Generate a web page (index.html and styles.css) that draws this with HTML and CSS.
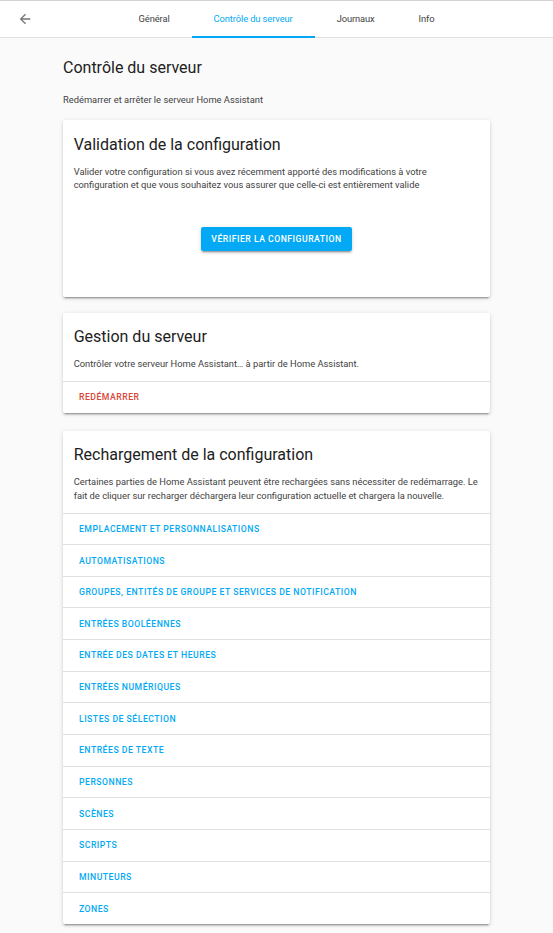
FILE: index.html
```html
<!DOCTYPE html>
<html lang="fr">
<head>
<meta charset="utf-8">
<title>Contrôle du serveur</title>
<link rel="stylesheet" href="styles.css">
</head>
<body>
<header class="toolbar">
  <button class="back" aria-label="Retour">
    <svg viewBox="0 0 24 24" width="16" height="16"><path fill="currentColor" d="M20,11V13H8L13.5,18.5L12.08,19.92L4.16,12L12.08,4.08L13.5,5.5L8,11H20Z"/></svg>
  </button>
  <nav class="tabs">
    <a class="tab">Général</a>
    <a class="tab active">Contrôle du serveur</a>
    <a class="tab">Journaux</a>
    <a class="tab">Info</a>
  </nav>
</header>
<main class="section">
  <h1 class="page-title">Contrôle du serveur</h1>
  <p class="intro">Redémarrer et arrêter le serveur Home Assistant</p>

  <section class="card card-validate">
    <h2 class="card-header">Validation de la configuration</h2>
    <div class="card-content">
      <p>Valider votre configuration si vous avez récemment apporté des modifications à votre configuration et que vous souhaitez vous assurer que celle-ci est entièrement valide</p>
      <div class="validate-container">
        <button class="raised">Vérifier la configuration</button>
      </div>
    </div>
  </section>

  <section class="card card-server">
    <h2 class="card-header">Gestion du serveur</h2>
    <div class="card-content">
      <p>Contrôler votre serveur Home Assistant… à partir de Home Assistant.</p>
    </div>
    <div class="card-actions"><button class="text-btn warning">Redémarrer</button></div>
  </section>

  <section class="card card-reload">
    <h2 class="card-header">Rechargement de la configuration</h2>
    <div class="card-content">
      <p>Certaines parties de Home Assistant peuvent être rechargées sans nécessiter de redémarrage. Le fait de cliquer sur recharger déchargera leur configuration actuelle et chargera la nouvelle.</p>
    </div>
    <div class="card-actions"><button class="text-btn">Emplacement et personnalisations</button></div>
    <div class="card-actions"><button class="text-btn">Automatisations</button></div>
    <div class="card-actions"><button class="text-btn">Groupes, entités de groupe et services de notification</button></div>
    <div class="card-actions"><button class="text-btn">Entrées booléennes</button></div>
    <div class="card-actions"><button class="text-btn">Entrée des dates et heures</button></div>
    <div class="card-actions"><button class="text-btn">Entrées numériques</button></div>
    <div class="card-actions"><button class="text-btn">Listes de sélection</button></div>
    <div class="card-actions"><button class="text-btn">Entrées de texte</button></div>
    <div class="card-actions"><button class="text-btn">Personnes</button></div>
    <div class="card-actions"><button class="text-btn">Scènes</button></div>
    <div class="card-actions"><button class="text-btn">Scripts</button></div>
    <div class="card-actions"><button class="text-btn">Minuteurs</button></div>
    <div class="card-actions"><button class="text-btn">Zones</button></div>
  </section>
</main>
</body>
</html>
```

FILE: styles.css
```css
* { box-sizing: border-box; }
html, body { margin: 0; padding: 0; }
body {
  background: #fafafa;
  font-family: Roboto, "Noto Sans", sans-serif;
  color: #212121;
  overflow: hidden;
  height: 933px;
}
.toolbar {
  display: flex;
  align-items: stretch;
  height: 38px;
  background: #fff;
  border-top: 1px solid #d4d2cf;
  border-bottom: 1px solid #e0e0e0;
}
.back {
  width: 52px;
  padding: 0 0 0 17px;
  border: 0;
  background: none;
  color: #757575;
  display: flex;
  align-items: center;
}
.back svg { display: block; }
.tabs {
  flex: 1;
  display: flex;
  justify-content: center;
  padding-right: 32px;
  margin-bottom: -1px;
}
.tab {
  display: flex;
  align-items: center;
  padding: 0 22px;
  font-size: 9.33px;
  letter-spacing: -0.1px;
  color: #424242;
  border-bottom: 2px solid transparent;
}
.tab.active {
  color: #03a9f4;
  border-bottom-color: #03a9f4;
}
.section {
  width: 427px;
  margin: 0 auto;
  padding-top: 18.67px;
}
.page-title {
  margin: 0 0 14.67px;
  font-size: 16px;
  line-height: 21.33px;
  font-weight: 400;
  color: #212121;
}
.intro {
  margin: 0 0 14.5px;
  font-size: 9.33px;
  line-height: 13.33px;
  color: #424242;
}
.card {
  background: #fff;
  border-radius: 2px;
  box-shadow: 0 2px 2px 0 rgba(0,0,0,0.14), 0 1px 5px 0 rgba(0,0,0,0.12), 0 3px 1px -2px rgba(0,0,0,0.2);
  margin-bottom: 16px;
}
.card-server { margin-bottom: 18px; }
.card-header {
  margin: 0;
  padding: 13.33px 10.67px 9.83px;
  font-size: 16px;
  line-height: 21.33px;
  font-weight: 400;
  color: #212121;
}
.card-content {
  padding: 0 10.67px 10.67px;
}
.card-content p {
  margin: 0;
  font-size: 9.33px;
  line-height: 13.33px;
  color: #424242;
}
.validate-container {
  height: 94.33px;
  display: flex;
  align-items: center;
  justify-content: center;
}
.raised {
  height: 24px;
  padding: 0 10.67px;
  border: 0;
  border-radius: 2px;
  background: #03a9f4;
  color: #fff;
  font-family: inherit;
  font-size: 8.67px;
  font-weight: 500;
  letter-spacing: 0.5px;
  text-transform: uppercase;
  box-shadow: 0 2px 2px 0 rgba(0,0,0,0.14), 0 1px 5px 0 rgba(0,0,0,0.12), 0 3px 1px -2px rgba(0,0,0,0.2);
}
.card-actions {
  border-top: 1px solid #e0e0e0;
  padding: 3.33px 5.33px;
  display: flex;
}
.text-btn {
  height: 24px;
  padding: 0 10.67px;
  border: 0;
  background: none;
  color: #03a9f4;
  font-family: inherit;
  font-size: 8.67px;
  font-weight: 500;
  letter-spacing: 0.5px;
  text-transform: uppercase;
}
.text-btn.warning { color: #db4437; }
```
